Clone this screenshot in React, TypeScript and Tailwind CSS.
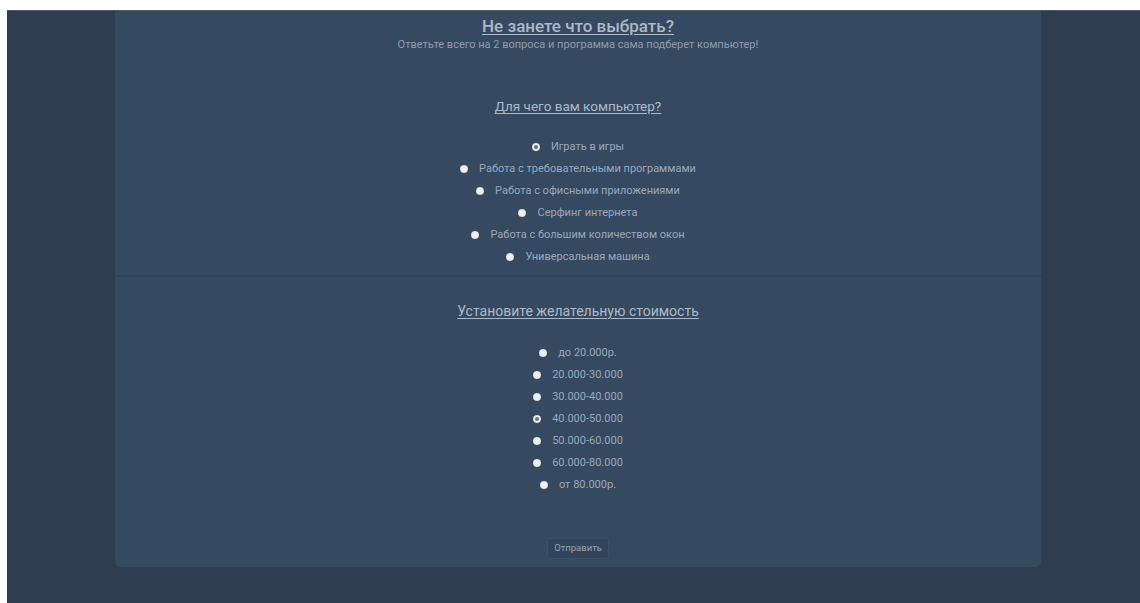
import { useState } from "react"

const purposes = [
  "Играть в игры",
  "Работа с требовательными программами",
  "Работа с офисными приложениями",
  "Серфинг интернета",
  "Работа с большим количеством окон",
  "Универсальная машина",
]

const prices = [
  "до 20.000р.",
  "20.000-30.000",
  "30.000-40.000",
  "40.000-50.000",
  "50.000-60.000",
  "60.000-80.000",
  "от 80.000р.",
]

function RadioRow({
  label,
  checked,
  onSelect,
}: {
  label: string
  checked: boolean
  onSelect: () => void
}) {
  return (
    <label
      className="flex h-[22px] cursor-pointer items-center justify-center gap-[11px]"
      onClick={onSelect}
    >
      <span className="flex h-[8px] w-[8px] items-center justify-center rounded-full bg-[#eef0f3] shadow-[inset_0_0_1px_rgba(0,0,0,0.5)]">
        {checked && <span className="h-[4px] w-[4px] rounded-full bg-[#6b7480]" />}
      </span>
      <span className="text-[11px] leading-[22px] text-[#9aa8ba]">{label}</span>
    </label>
  )
}

export default function App() {
  const [purpose, setPurpose] = useState(0)
  const [price, setPrice] = useState(3)

  return (
    <div className="min-h-[603px] bg-white pl-[7px] pt-[10px]" style={{ fontFamily: "Roboto, 'Noto Sans', sans-serif" }}>
      <div className="min-h-[593px] border-t border-[#4d5b6b] bg-[#2e3e50]">
        <div className="ml-[108px] w-[926px] rounded-b-[6px] bg-[#354a60] pb-[8px] pt-[4px] text-center">
          <h1 className="text-[17px] font-medium leading-[22px] text-[#aeb9c8] underline underline-offset-2">
            Не занете что выбрать?
          </h1>
          <p className="mt-[1px] text-[11px] leading-[14px] text-[#8f9cae]">
            Ответьте всего на 2 вопроса и программа сама подберет компьютер!
          </p>

          <h2 className="mt-[44px] text-[13.5px] leading-[20px] text-[#aeb9c8] underline underline-offset-2">
            Для чего вам компьютер?
          </h2>
          <div className="mt-[20px]">
            {purposes.map((p, i) => (
              <RadioRow key={p} label={p} checked={purpose === i} onSelect={() => setPurpose(i)} />
            ))}
          </div>

          <div className="mt-[7px] h-[2px] bg-[#30435a]" />

          <h2 className="mt-[24px] text-[14px] leading-[20px] text-[#aeb9c8] underline underline-offset-2">
            Установите желательную стоимость
          </h2>
          <div className="mt-[21px]">
            {prices.map((p, i) => (
              <RadioRow key={p} label={p} checked={price === i} onSelect={() => setPrice(i)} />
            ))}
          </div>

          <button className="mt-[42px] h-[21px] rounded-[2px] border border-[#3b4f66] bg-[#30445a] px-[6px] text-[9.5px] text-[#95a3b5]">
            Отправить
          </button>
        </div>
      </div>
    </div>
  )
}
